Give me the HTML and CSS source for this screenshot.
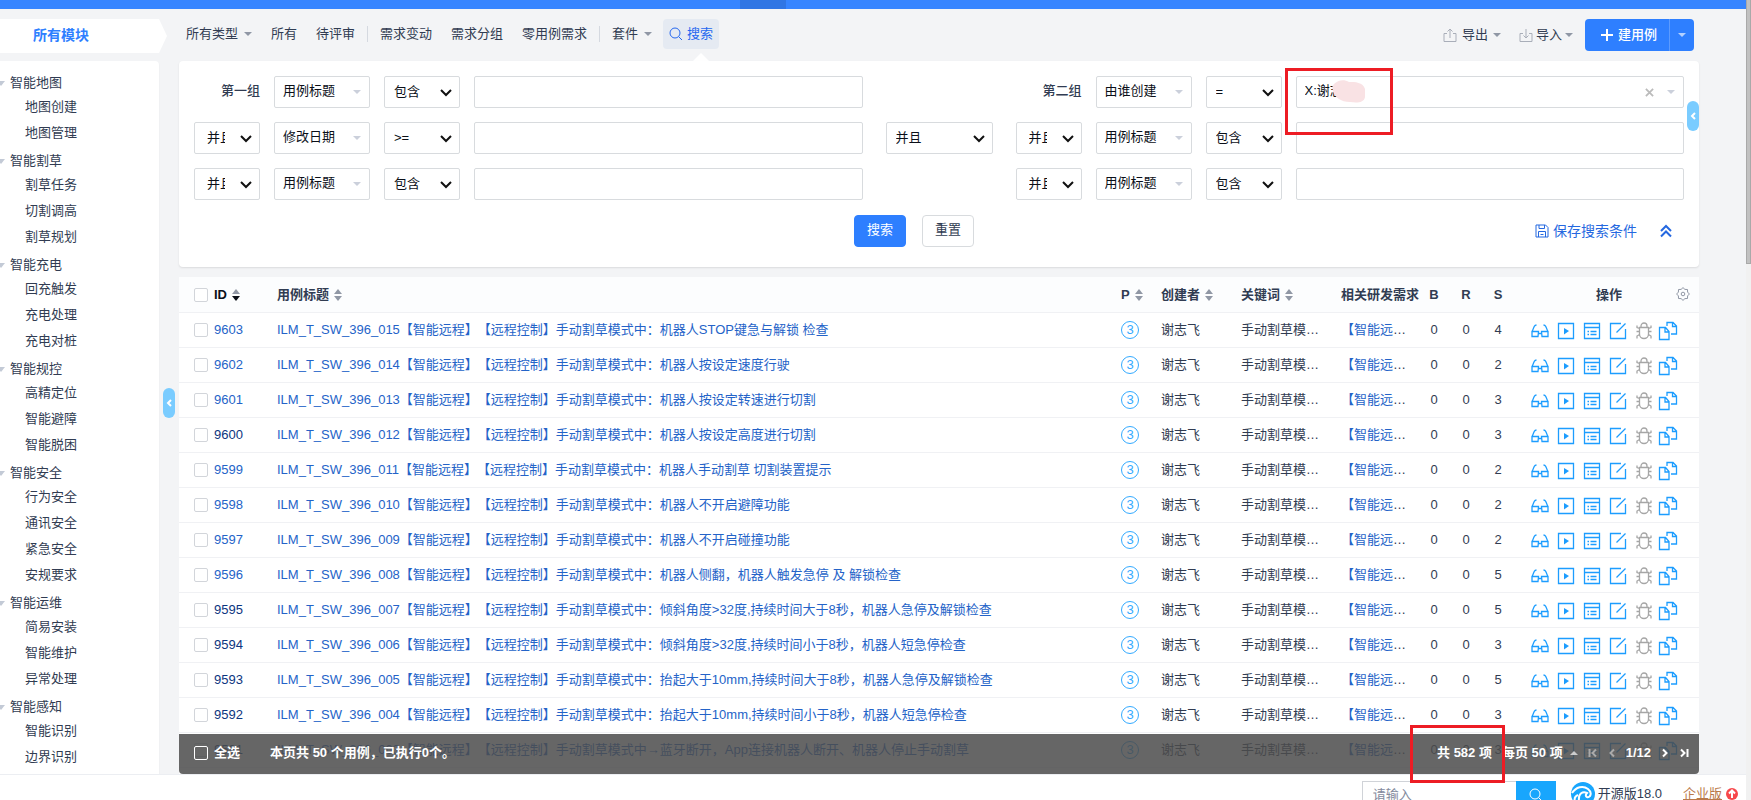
FILE: index.html
```html
<!DOCTYPE html>
<html lang="zh-CN">
<head>
  <meta charset="utf-8">
  <title>用例列表</title>
  <link rel="stylesheet" href="styles.css">
</head>
<body>
  <svg class="sprite" aria-hidden="true">
    <symbol id="i-search" viewBox="0 0 14 14"><circle cx="6" cy="6" r="5"/><path d="M9.7 9.7 13 13"/></symbol>
    <symbol id="i-export" viewBox="0 0 14 14"><path d="M4 5.5H1v8h12v-8h-3M7 10V1M4.5 3.5 7 1l2.500 2.500"/></symbol>
    <symbol id="i-import" viewBox="0 0 14 14"><path d="M4 5.500H1v8h12v-8h-3M7 1v9M4.500 7.500 7 10l2.500-2.500"/></symbol>
    <symbol id="i-plus" viewBox="0 0 14 14"><path d="M7 1v12M1 7h12"/></symbol>
    <symbol id="i-close" viewBox="0 0 10 10"><path d="m1 1 8 8M9 1 1 9"/></symbol>
    <symbol id="i-save" viewBox="0 0 14 14"><path d="M1 1h9.500L13 3.500V13H1zM3.500 13V7.500h7V13M4 1v3.500h5.500V1M5.500 10.500h3"/></symbol>
    <symbol id="i-up2" viewBox="0 0 12 14"><path d="m1 7 5-5 5 5M1 12.500l5-5 5 5"/></symbol>
    <symbol id="i-left" viewBox="0 0 6 8"><path d="M5 1 2 4l3 3"/></symbol>
    <symbol id="i-gear" viewBox="0 0 14 14"><path d="M7 .6 8.900 2.400l2.600.1.1 2.600L13.400 7l-1.800 1.900-.1 2.600-2.600.1L7 13.400l-1.900-1.800-2.600-.1-.1-2.600L.6 7l1.800-1.900.1-2.600 2.600-.1z"/><circle cx="7" cy="7" r="1.800"/></symbol>
    <symbol id="i-glasses" viewBox="0 0 18 18"><path d="M5.500 3C3.300 3.200 3 4.500 1 10M12.500 3c2.200.2 2.500 1.500 4.500 7M1 9.500h6.500l-.5 5H1zM10.500 9.500H17v5h-6zM7.500 11.500h3"/></symbol>
    <symbol id="i-run" viewBox="0 0 18 18"><path d="M1.500 1.500h15v15h-15z"/><path class="fill" d="m7 6 5 3-5 3.500z"/></symbol>
    <symbol id="i-result" viewBox="0 0 18 18"><path d="M1.500 1.500h15v15h-15zM1.500 5.500h15M4.500 9.500H6M7.500 9.500h6M4.500 12.500H6M7.500 12.500h6"/></symbol>
    <symbol id="i-edit" viewBox="0 0 18 18"><path d="M12 1.500H1.500v15h15V7M7.500 10.500l9-9"/></symbol>
    <symbol id="i-bug" viewBox="0 0 18 18"><path d="M6 5.500V4a3 3 0 0 1 6 0v1.500M4.500 5.500h9V12a4.500 4.500 0 0 1-9 0zM4.500 9.500h-3M16.500 9.500h-3M4.500 6.500 2 5.500V3.500M13.500 6.500l2.500-1V3.500M4.500 12.500 2 14v2.500M13.500 12.500 16 14v2.500"/></symbol>
    <symbol id="i-copy" viewBox="0 0 20 20"><path d="M1.500 6.500h6l3.500 4v8H1.500zM7 7v4h4M9 5V1.500h6l3.500 3.500v8H13M14.500 2v3.500H18"/></symbol>
    <symbol id="i-logo" viewBox="0 0 24 24"><circle class="fill" cx="12" cy="12" r="12"/><path class="wave" d="M1 11C5 5 12 3 17 7c5 4 2 9-1 8-2-1-1-3 0-4-4-2-9 0-8 8M7 13c-3 1-4 4-3 8"/></symbol>
  </svg>

  <div class="page">
    <div class="app">
      <header class="topbar"><span class="topbar-active"></span></header>

      <nav class="menu">
        <div class="module-tab"><a href="#">所有模块</a></div>
        <div class="menu-left">
          <a href="#" class="menu-item">所有类型<i class="caret"></i></a>
          <a href="#" class="menu-item">所有</a>
          <a href="#" class="menu-item">待评审</a>
          <span class="divider"></span>
          <a href="#" class="menu-item">需求变动</a>
          <a href="#" class="menu-item">需求分组</a>
          <a href="#" class="menu-item">零用例需求</a>
          <span class="divider"></span>
          <a href="#" class="menu-item">套件<i class="caret"></i></a>
          <button type="button" class="search-tab"><svg class="icon i14"><use href="#i-search"/></svg>搜索</button>
        </div>
        <div class="menu-right">
          <button type="button" class="link-btn"><svg class="icon i14"><use href="#i-export"/></svg>导出<i class="caret"></i></button>
          <button type="button" class="link-btn tight"><svg class="icon i14"><use href="#i-import"/></svg>导入<i class="caret"></i></button>
          <div class="btn-group">
            <button type="button" class="create"><svg class="icon i14"><use href="#i-plus"/></svg>建用例</button>
            <button type="button" class="create-more" aria-label="更多"><i class="caret"></i></button>
          </div>
        </div>
      </nav>

      <div class="body">
        <aside class="sidebar">
          <ul class="tree">
            <li><a href="#">智能地图</a>
              <ul><li><a href="#">地图创建</a></li><li><a href="#">地图管理</a></li></ul></li>
            <li><a href="#">智能割草</a>
              <ul><li><a href="#">割草任务</a></li><li><a href="#">切割调高</a></li><li><a href="#">割草规划</a></li></ul></li>
            <li><a href="#">智能充电</a>
              <ul><li><a href="#">回充触发</a></li><li><a href="#">充电处理</a></li><li><a href="#">充电对桩</a></li></ul></li>
            <li><a href="#">智能规控</a>
              <ul><li><a href="#">高精定位</a></li><li><a href="#">智能避障</a></li><li><a href="#">智能脱困</a></li></ul></li>
            <li><a href="#">智能安全</a>
              <ul><li><a href="#">行为安全</a></li><li><a href="#">通讯安全</a></li><li><a href="#">紧急安全</a></li><li><a href="#">安规要求</a></li></ul></li>
            <li><a href="#">智能运维</a>
              <ul><li><a href="#">简易安装</a></li><li><a href="#">智能维护</a></li><li><a href="#">异常处理</a></li></ul></li>
            <li><a href="#">智能感知</a>
              <ul><li><a href="#">智能识别</a></li><li><a href="#">边界识别</a></li></ul></li>
          </ul>
        </aside>
        <div class="gutter">
          <button type="button" class="handle" aria-label="收起"><svg class="icon"><use href="#i-left"/></svg></button>
        </div>

        <main class="main">
          <form class="search">
            <div class="groups">
              <div class="group">
                <strong>第一组</strong>
                <label class="picker"><select aria-label="字段"><option>用例标题</option></select><i class="caret"></i></label>
                <select class="op" aria-label="条件"><option>包含</option></select>
                <input type="text" aria-label="值">

                <select class="op and" aria-label="关系"><option>并且</option></select>
                <label class="picker"><select aria-label="字段"><option>修改日期</option></select><i class="caret"></i></label>
                <select class="op" aria-label="条件"><option>&gt;=</option></select>
                <input type="text" aria-label="值">

                <select class="op and" aria-label="关系"><option>并且</option></select>
                <label class="picker"><select aria-label="字段"><option>用例标题</option></select><i class="caret"></i></label>
                <select class="op" aria-label="条件"><option>包含</option></select>
                <input type="text" aria-label="值">
              </div>

              <select class="op" aria-label="组关系"><option>并且</option></select>

              <div class="group">
                <strong>第二组</strong>
                <label class="picker"><select aria-label="字段"><option>由谁创建</option></select><i class="caret"></i></label>
                <select class="op" aria-label="条件"><option>=</option></select>
                <label class="picker value">
                  <select aria-label="值"><option>X:谢志</option></select>
                  <svg class="icon clear"><use href="#i-close"/></svg><i class="caret"></i>
                  <svg class="smudge" viewBox="0 0 33 23"><path d="M2 4C6 0 12-1 17 2c6 0 14 0 16 7v8c-1 6-8 6-15 5C9 22 2 17 1 11 0 8 0 6 2 4z"/></svg>
                  <span class="mark mark-user"></span>
                </label>

                <select class="op and" aria-label="关系"><option>并且</option></select>
                <label class="picker"><select aria-label="字段"><option>用例标题</option></select><i class="caret"></i></label>
                <select class="op" aria-label="条件"><option>包含</option></select>
                <input type="text" aria-label="值">

                <select class="op and" aria-label="关系"><option>并且</option></select>
                <label class="picker"><select aria-label="字段"><option>用例标题</option></select><i class="caret"></i></label>
                <select class="op" aria-label="条件"><option>包含</option></select>
                <input type="text" aria-label="值">
              </div>
            </div>
            <div class="actions">
              <span></span>
              <div class="submit">
                <button type="submit" class="primary">搜索</button>
                <button type="reset">重置</button>
              </div>
              <div class="save">
                <a href="#"><svg class="icon i14"><use href="#i-save"/></svg>保存搜索条件</a>
                <a href="#" aria-label="收起"><svg class="icon up2"><use href="#i-up2"/></svg></a>
              </div>
            </div>
            <button type="button" class="handle handle-right" aria-label="展开"><svg class="icon"><use href="#i-left"/></svg></button>
          </form>

          <section class="cases">
            <div class="table-wrap">
              <table>
                <colgroup>
                  <col class="c-id"><col><col class="c-p"><col class="c-user"><col class="c-key"><col class="c-story">
                  <col class="c-n"><col class="c-n"><col class="c-n"><col class="c-act">
                </colgroup>
                <thead>
                  <tr>
                    <th class="id"><label><input type="checkbox" aria-label="全选">ID</label><i class="sort down"></i></th>
                    <th>用例标题<i class="sort"></i></th>
                    <th>P<i class="sort"></i></th>
                    <th>创建者<i class="sort"></i></th>
                    <th>关键词<i class="sort"></i></th>
                    <th class="story">相关研发需求</th>
                    <th class="num">B</th>
                    <th class="num">R</th>
                    <th class="num">S</th>
                    <th class="act"><span>操作</span><svg class="icon i14 gear"><use href="#i-gear"/></svg></th>
                  </tr>
                </thead>
                <tbody id="rows"></tbody>
              </table>
            </div>
            <footer class="pager">
              <label class="all"><input type="checkbox">全选</label>
              <span>本页共 <b>50</b> 个用例，已执行0个。</span>
              <div class="pages">
                <span class="total">共 <b>582</b> 项<span class="mark mark-total"></span></span>
                <button type="button" class="size"><span>每页 <b>50</b> 项</span><i class="caret up"></i></button>
                <button type="button" class="off" aria-label="首页"><svg class="icon nav"><path d="M1.500 1v8M8 1.500 4.500 5 8 8.500"/></svg></button>
                <button type="button" class="off" aria-label="上一页"><svg class="icon nav"><path d="M7 1.500 3.500 5 7 8.500"/></svg></button>
                <b>1/12</b>
                <button type="button" aria-label="下一页"><svg class="icon nav"><path d="M3 1.500 6.500 5 3 8.500"/></svg></button>
                <button type="button" aria-label="末页"><svg class="icon nav"><path d="M8.500 1v8M2 1.500 5.500 5 2 8.500"/></svg></button>
              </div>
            </footer>
          </section>
        </main>
      </div>

      <footer class="bottom">
        <div class="quick">
          <input type="text" placeholder="请输入" aria-label="搜索">
          <button type="button" aria-label="搜索"><svg class="icon i14"><use href="#i-search"/></svg></button>
        </div>
        <a href="#" class="version"><svg class="icon logo"><use href="#i-logo"/></svg>开源版18.0</a>
        <a href="#" class="biz"><span>企业版</span><svg class="upgrade" viewBox="0 0 12 12"><circle cx="6" cy="6" r="6"/><path d="M6 10V3M3 5.500l3-3 3 3"/></svg></a>
      </footer>
    </div>
    <div class="scroll"><div class="thumb"></div></div>
  </div>
  <script src="rows.js"></script>
</body>
</html>
```
FILE: styles.css
```css
* {
  box-sizing: border-box;
}

body {
  margin: 0;
  font: 13px/20px "Liberation Sans", "Noto Sans CJK SC", sans-serif;
  color: #313c52;
  background: #f3f4f6;
  text-spacing-trim: space-all;
}

a {
  color: inherit;
  text-decoration: none;
}

ul {
  margin: 0;
  padding: 0;
  list-style: none;
}

button, input, select {
  font: inherit;
  color: inherit;
}

button {
  padding: 0;
  border: 0;
  background: none;
}

.sprite {
  display: none;
}

.icon {
  flex: none;
  fill: none;
  stroke: currentColor;
}

.icon .fill,
.fill {
  fill: currentColor;
  stroke: none;
}

.i14 {
  width: 14px;
  height: 14px;
}

.caret {
  display: inline-block;
  border: 4px solid transparent;
  border-top-color: #9097a5;
  border-bottom: 0;
}

.page {
  display: flex;
  height: 100vh;
  overflow: hidden;
}

.app {
  display: flex;
  flex: 1;
  flex-direction: column;
  min-width: 0;
}

.scroll {
  width: 5px;
  background: #f1f1f1;
}

.thumb {
  height: 33%;
  background: #c1c1c1;
  border: 1px solid #a9a9a9;
  border-top: 0;
}

/* top */
.topbar {
  display: flex;
  justify-content: center;
  flex: none;
  height: 9px;
  padding-right: 220px;
  background: #3785ff;
}

.topbar-active {
  width: 46px;
  background: #3076e4;
}

.menu {
  display: flex;
  flex: none;
  height: 52px;
  padding: 10px 52px 0 0;
}

.module-tab {
  width: 167px;
  height: 34px;
  padding-left: 33px;
  line-height: 32px;
  font-size: 14px;
  font-weight: bold;
  color: #2e7fff;
  background: #fff;
  clip-path: polygon(0 0, 159px 0, 100% 50%, 159px 100%, 0 100%);
}

.menu-left {
  display: flex;
  align-items: center;
  gap: 19px;
  height: 30px;
  padding-left: 19px;
}

.menu-item,
.link-btn {
  display: flex;
  align-items: center;
  gap: 6px;
}

.divider {
  width: 1px;
  height: 16px;
  margin: 0 -7px;
  background: #d5d9e0;
}

.search-tab {
  position: relative;
  display: flex;
  align-items: center;
  gap: 4px;
  height: 30px;
  margin-left: -8px;
  padding: 0 6px;
  color: #2568f0;
  background: #e5eaf2;
  border-radius: 4px;
}

.search-tab::after {
  content: "";
  position: absolute;
  top: 34px;
  left: 30px;
  border: 8px solid transparent;
  border-top: 0;
  border-bottom-color: #fff;
}

.menu-right {
  display: flex;
  align-items: center;
  gap: 18px;
  height: 32px;
  margin-left: auto;
}

.link-btn {
  gap: 5px;
}

.link-btn.tight {
  gap: 3px;
}

.link-btn .icon {
  color: #a9aeb9;
}

.btn-group {
  display: flex;
  height: 32px;
  margin-left: -6px;
  color: #fff;
  background: #2e7fff;
  border-radius: 4px;
}

.create {
  display: flex;
  align-items: center;
  gap: 4px;
  padding: 0 12px 0 15px;
  font-weight: 500;
}

.create .icon {
  stroke-width: 2;
}

.create-more {
  display: flex;
  align-items: center;
  padding: 0 8px;
  border-left: 1px solid #5c9bff;
}

.create-more .caret {
  border-top-color: #b4d1ff;
}

.body {
  display: flex;
  flex: 1;
  min-height: 0;
}

.sidebar {
  width: 159px;
  padding-top: 7px;
  overflow: hidden;
  background: #fff;
  border-radius: 0 4px 0 0;
  box-shadow: 0 1px 2px rgba(0, 0, 0, 0.06);
}

.tree a {
  display: block;
  line-height: 26px;
  padding-left: 25px;
}

.tree > li > a {
  display: flex;
  align-items: center;
  gap: 5px;
  padding: 4px 0 0;
  margin-left: -3px;
  line-height: 22px;
}

.tree > li > a::before {
  content: "";
  border: 4px solid transparent;
  border-top: 5px solid #c3cad6;
  border-bottom: 0;
}

.gutter {
  display: flex;
  align-items: center;
  width: 20px;
  padding: 0 0 29px 4px;
}

.handle {
  display: flex;
  align-items: center;
  justify-content: center;
  width: 12px;
  height: 30px;
  color: #fff;
  background: #7accff;
  border-radius: 6px;
}

.handle .icon {
  width: 6px;
  height: 8px;
  stroke-width: 2;
}

.handle-right {
  position: absolute;
  top: 40px;
  right: 0;
}

.main {
  display: flex;
  flex: 1;
  flex-direction: column;
  gap: 10px;
  min-width: 0;
  margin-right: 47px;
}

/* search form */
.search {
  position: relative;
  flex: none;
  padding: 15px 15px 20px;
  background: #fff;
  border-radius: 4px;
  box-shadow: 0 1px 2px rgba(0, 0, 0, 0.1);
}

.groups {
  display: grid;
  grid-template-columns: 1fr 107px 1fr;
  align-items: center;
  gap: 23px;
}

.group {
  display: grid;
  grid-template-columns: 66px 96px 76px 1fr;
  align-items: center;
  gap: 14px;
}

.group strong {
  padding-bottom: 2px;
  font-weight: 500;
  text-align: right;
}

.search select,
.search input {
  width: 100%;
  min-width: 0;
  height: 32px;
  appearance: none;
  color: #0b0f18;
  background-color: #fff;
  border: 1px solid #d8dbde;
  border-radius: 2px;
}

.search .op {
  padding: 0 28px 0 9px;
  text-overflow: clip;
  background: url("data:image/svg+xml,%3Csvg xmlns='http://www.w3.org/2000/svg' width='12' height='8' fill='none' stroke='%23111' stroke-width='2'%3E%3Cpath d='m1 1 5 5 5-5'/%3E%3C/svg%3E") no-repeat right 7px top 12px #fff;
}

.search .and {
  padding: 0 34px 0 12px;
}

.picker {
  position: relative;
  display: block;
}

.picker select {
  display: block;
  padding: 0 8px 2px;
}

.picker .caret {
  position: absolute;
  top: 14px;
  right: 9px;
  border-top-color: #cbd0db;
}

.clear {
  position: absolute;
  top: 12px;
  right: 30px;
  width: 9px;
  height: 9px;
  color: #bbb;
  stroke-width: 2;
}

.smudge {
  position: absolute;
  top: 4px;
  left: 36px;
  width: 33px;
  height: 23px;
  fill: #f9e2e4;
}

.mark {
  position: absolute;
  z-index: 5;
  border: 3px solid #ed1c24;
  pointer-events: none;
}

.mark-user {
  top: -8px;
  left: -11px;
  width: 108px;
  height: 67px;
}

.mark-total {
  top: -18px;
  left: -27px;
  width: 95px;
  height: 58px;
}

.actions {
  display: grid;
  grid-template-columns: 1fr auto 1fr;
  align-items: center;
  margin-top: 15px;
}

.submit {
  display: flex;
  gap: 16px;
  margin-right: 50px;
}

.submit button {
  width: 52px;
  height: 32px;
  padding-bottom: 2px;
  border: 1px solid #d8dbde;
  border-radius: 4px;
}

.submit .primary {
  color: #fff;
  background: #2e7fff;
  border-color: #2e7fff;
}

.save {
  display: flex;
  align-items: center;
  justify-content: flex-end;
  gap: 23px;
  padding-right: 12px;
  font-size: 14px;
  color: #2568e0;
}

.save a {
  display: flex;
  align-items: center;
  gap: 4px;
}

.up2 {
  width: 12px;
  height: 14px;
  stroke-width: 2;
}

/* case list */
.cases {
  position: relative;
  flex: 1;
  min-height: 0;
}

.table-wrap {
  height: 100%;
  overflow: hidden;
  background: #fff;
}

table {
  width: 100%;
  table-layout: fixed;
  border-collapse: separate;
  border-spacing: 0;
}

.c-id { width: 90px; }
.c-p { width: 40px; }
.c-user { width: 80px; }
.c-key { width: 100px; }
.c-story { width: 85px; }
.c-n { width: 32px; }
.c-act { width: 185px; }

th,
td {
  height: 35px;
  padding: 0 8px;
  overflow: hidden;
  text-align: left;
  text-overflow: ellipsis;
  white-space: nowrap;
  border-bottom: 1px solid #f0f1f4;
}

th {
  height: 36px;
  background: #fcfdfe;
}

th.story {
  overflow: visible;
}

th.id,
td.id {
  padding-left: 15px;
}

.id label,
.all {
  display: inline-flex;
  align-items: center;
  gap: 6px;
  vertical-align: middle;
}

th.id,
th.id label {
  color: #0b0f18;
}

input[type="checkbox"] {
  appearance: none;
  width: 14px;
  height: 14px;
  margin: 0;
  border: 1px solid #d2d5da;
  border-radius: 2px;
  background: #fff;
}

.sort {
  display: inline-flex;
  flex-direction: column;
  gap: 2px;
  margin-left: 5px;
  vertical-align: middle;
}

.sort::before,
.sort::after {
  content: "";
  border: 4px solid transparent;
}

.sort::before {
  border-top: 0;
  border-bottom: 5px solid #9097a5;
}

.sort::after {
  border-bottom: 0;
  border-top: 5px solid #9097a5;
}

.sort.down::after {
  border-top-color: #0b0f18;
}

th.num,
td.num {
  padding: 0;
  text-align: center;
}

td a {
  color: #2463c8;
}

td a.seen {
  color: #0c3580;
}

.pri {
  display: block;
  width: 18px;
  height: 18px;
  line-height: 16px;
  text-align: center;
  color: #33aaff;
  border: 1px solid #33aaff;
  border-radius: 50%;
}

th.act {
  position: relative;
  padding: 0 0 0 5px;
  text-align: center;
}

.gear {
  position: absolute;
  top: 10px;
  right: 9px;
  color: #9097a5;
}

.ops {
  display: flex;
  align-items: center;
  gap: 8px;
  padding: 0 9px;
  color: #1c9dff;
}

td.act {
  padding-top: 2px;
}

.ops button {
  display: flex;
}

.ops .icon {
  width: 18px;
  height: 18px;
  stroke-width: 1.3px;
}

.ops .copy .icon {
  width: 20px;
  height: 20px;
}

.ops .copy {
  margin-left: -3px;
}

.ops .bug {
  color: #a6a6a6;
}

.pager {
  position: absolute;
  right: 0;
  bottom: 0;
  left: 0;
  display: flex;
  align-items: center;
  gap: 30px;
  height: 40px;
  padding: 0 10px 2px 15px;
  color: #fff;
  font-weight: bold;
  background: rgba(75, 75, 75, 0.85);
  border-radius: 0 0 4px 4px;
}

.pager input {
  background: none;
  border-color: #fff;
}

.pages {
  display: flex;
  align-items: center;
  gap: 9px;
  margin-left: auto;
}

.total {
  position: relative;
}

.size {
  display: flex;
  align-items: center;
  gap: 4px;
  margin: 0 1px;
}

.caret.up {
  margin-left: 3px;
  border-top: 0;
  border-bottom: 4px solid #ccc;
}

.nav {
  display: block;
  width: 10px;
  height: 10px;
  stroke-width: 2;
}

.off {
  color: #aaa;
}

.bottom {
  display: flex;
  align-items: flex-start;
  justify-content: flex-end;
  flex: none;
  height: 26px;
  padding: 6px 8px 0 0;
  background: #fff;
  border-top: 1px solid #eceef2;
}

.quick {
  display: flex;
  height: 28px;
}

.quick input {
  width: 154px;
  padding: 0 10px;
  border: 1px solid #d0d3d8;
  border-right: 0;
}

.quick input::placeholder {
  color: #838a9d;
}

.quick button {
  display: flex;
  align-items: center;
  justify-content: center;
  width: 40px;
  color: #fff;
  background: #18a6fd;
}

.version {
  display: flex;
  align-items: center;
  gap: 3px;
  margin: 1px 21px 0 15px;
}

.logo {
  width: 24px;
  height: 24px;
  color: #18a6fd;
}

.wave {
  stroke: #fff;
  stroke-width: 2;
}

.biz {
  display: flex;
  align-items: center;
  gap: 4px;
  margin-top: 3px;
  color: #b9794a;
}

.biz span {
  text-decoration: underline;
}

.upgrade {
  width: 12px;
  height: 12px;
  fill: #f7474b;
}

.upgrade path {
  fill: none;
  stroke: #fff;
  stroke-width: 2;
}
```
FILE: rows.js
```js
const prefix = '【智能远程】【远程控制】手动割草模式中';

// id, title tail, steps, visited
const cases = [
  [9603, '：机器人STOP键急与解锁 检查', 4, false],
  [9602, '：机器人按设定速度行驶', 2, false],
  [9601, '：机器人按设定转速进行切割', 3, false],
  [9600, '：机器人按设定高度进行切割', 3, true],
  [9599, '：机器人手动割草 切割装置提示', 2, false],
  [9598, '：机器人不开启避障功能', 2, false],
  [9597, '：机器人不开启碰撞功能', 2, false],
  [9596, '：机器人侧翻，机器人触发急停 及 解锁检查', 5, false],
  [9595, '：倾斜角度>32度,持续时间大于8秒，机器人急停及解锁检查', 5, true],
  [9594, '：倾斜角度>32度,持续时间小于8秒，机器人短急停检查', 3, true],
  [9593, '：抬起大于10mm,持续时间大于8秒，机器人急停及解锁检查', 5, true],
  [9592, '：抬起大于10mm,持续时间小于8秒，机器人短急停检查', 3, true],
  [9591, '→蓝牙断开，App连接机器人断开、机器人停止手动割草', 3, true],
];

const ops = [
  ['glasses', '查看'],
  ['run', '执行'],
  ['result', '结果'],
  ['edit', '编辑'],
  ['bug', '提Bug'],
  ['copy', '复制'],
];

const buttons = ops.map(([name, label]) =>
  `<button type="button" class="${name}" aria-label="${label}"><svg class="icon"><use href="#i-${name}"/></svg></button>`
).join('');

document.getElementById('rows').innerHTML = cases.map(([id, tail, steps, seen], i) => {
  const no = String(15 - i).padStart(3, '0');
  const title = `ILM_T_SW_396_${no}${prefix}${tail.replace('>', '&gt;')}`;
  return `<tr>
    <td class="id"><label><input type="checkbox" aria-label="${id}"><a href="#"${seen ? ' class="seen"' : ''}>${id}</a></label></td>
    <td><a href="#">${title}</a></td>
    <td><span class="pri">3</span></td>
    <td>谢志飞</td>
    <td>手动割草模式中</td>
    <td><a href="#">【智能远程】</a></td>
    <td class="num">0</td>
    <td class="num">0</td>
    <td class="num">${steps}</td>
    <td class="act"><div class="ops">${buttons}</div></td>
  </tr>`;
}).join('');
```
